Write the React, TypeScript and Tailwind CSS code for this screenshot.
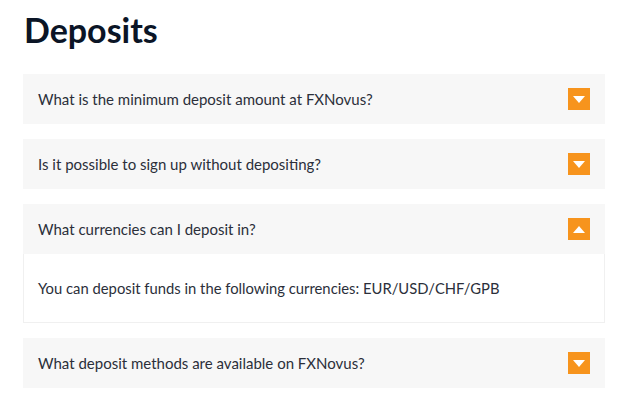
import React from "react";

const items = [
  { q: "What is the minimum deposit amount at FXNovus?", open: false },
  { q: "Is it possible to sign up without depositing?", open: false },
  {
    q: "What currencies can I deposit in?",
    open: true,
    a: "You can deposit funds in the following currencies: EUR/USD/CHF/GPB",
  },
  { q: "What deposit methods are available on FXNovus?", open: false },
];

function Toggle({ open }: { open: boolean }) {
  return (
    <div className="w-[22px] h-[22px] bg-[#f7941d] flex items-center justify-center">
      <svg width="12" height="7" viewBox="0 0 12 7">
        {open ? (
          <polygon points="0,7 12,7 6,0" fill="#fff" />
        ) : (
          <polygon points="0,0 12,0 6,7" fill="#fff" />
        )}
      </svg>
    </div>
  );
}

export default function App() {
  return (
    <div
      className="bg-white w-[625px] h-[402px] pl-[23px] pr-[20px] pt-[8px] text-[#333]"
      style={{ fontFamily: "Lato, 'Open Sans', sans-serif" }}
    >
      <h1 className="text-[34px] font-bold leading-[44px] text-[#0b1526] pl-[1px]">Deposits</h1>
      <div className="mt-[22px] flex flex-col gap-[15px]">
        {items.map((it) => (
          <div key={it.q}>
            <div className="h-[50px] bg-[#f7f7f7] flex items-center justify-between pl-[15px] pr-[15px]">
              <span className="text-[15px] text-[#2b2f3a]">{it.q}</span>
              <Toggle open={it.open} />
            </div>
            {it.open && (
              <div className="h-[69px] border border-t-0 border-[#f0f0f0] flex items-center pl-[14px]">
                <span className="text-[14.8px] text-[#2b2f3a]">{it.a}</span>
              </div>
            )}
          </div>
        ))}
      </div>
    </div>
  );
}
